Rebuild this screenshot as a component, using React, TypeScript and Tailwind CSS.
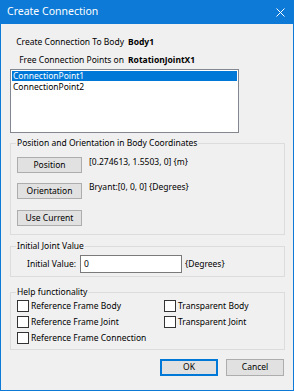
import React from 'react';

const font = { fontFamily: '"Noto Sans", "Liberation Sans", sans-serif' };

const WinButton: React.FC<{ label: string; className?: string; primary?: boolean }> = ({ label, className = '', primary }) => (
  <button
    className={`h-[16px] flex items-center justify-center bg-[#e1e1e1] text-[8.5px] text-black leading-none ${
      primary ? 'border-2 border-[#0078d7]' : 'border border-[#adadad]'
    } ${className}`}
  >
    {label}
  </button>
);

const Check: React.FC<{ label: string }> = ({ label }) => (
  <label className="flex items-center h-[16px] gap-[2px] text-[8.5px] text-black">
    <span className="w-[12px] h-[12px] border border-[#333] bg-white" />
    {label}
  </label>
);

const Group: React.FC<{ title: string; className?: string; children: React.ReactNode }> = ({ title, className = '', children }) => (
  <fieldset className={`ml-[9px] w-[275px] border border-[#dcdcdc] ${className}`}>
    <legend className="ml-[5px] px-px text-[8.5px] leading-[12px] text-black">{title}</legend>
    {children}
  </fieldset>
);

export default function App() {
  return (
    <div style={font} className="w-[294px] h-[391px] flex flex-col bg-[#0c7ad6] px-px pb-px">
      <div className="h-[24px] flex items-center justify-between pl-[6px] pr-[8px] text-white text-[10.5px]">
        <span>Create Connection</span>
        <svg width="9" height="9" viewBox="0 0 9 9" className="mt-[1px]">
          <path d="M0.5 0.5 L8.5 8.5 M8.5 0.5 L0.5 8.5" stroke="white" strokeWidth="1" />
        </svg>
      </div>

      <div className="flex-1 bg-[#f0f0f0] flex flex-col">
        <div className="mt-[9px] flex h-[18px] items-center text-[8.5px] text-black">
          <span className="w-[123px] text-right">Create Connection To Body</span>
          <span className="pl-[4px] font-bold">Body1</span>
        </div>
        <div className="flex h-[18px] items-center text-[8.5px] text-black">
          <span className="w-[123px] text-right">Free Connection Points on</span>
          <span className="pl-[4px] font-bold">RotationJointX1</span>
        </div>

        <div className="ml-[9px] w-[229px] h-[64px] border border-[#828790] bg-white p-px text-[8.5px]">
          <div className="h-[10px] leading-[10px] bg-[#0078d7] text-white pl-px">ConnectionPoint1</div>
          <div className="h-[11px] leading-[12px] text-black pl-px">ConnectionPoint2</div>
        </div>

        <Group title="Position and Orientation in Body Coordinates" className="mt-[4px]">
          <div className="mt-[8px] pl-[6px] pb-[8px] flex flex-col gap-[10px]">
            <div className="flex items-start gap-[7px]">
              <WinButton label="Position" className="w-[65px]" />
              <span className="text-[8.5px] leading-[12px] -mt-[1px] text-black">[0.274613, 1.5503, 0] {'{m}'}</span>
            </div>
            <div className="flex items-start gap-[7px]">
              <WinButton label="Orientation" className="w-[65px]" />
              <span className="text-[8.5px] leading-[12px] -mt-[2px] text-black">Bryant:[0, 0, 0] {'{Degrees}'}</span>
            </div>
            <div className="flex items-start mt-px">
              <WinButton label="Use Current" className="w-[65px]" />
            </div>
          </div>
        </Group>

        <Group title="Initial Joint Value" className="mt-[5px]">
          <div className="mt-[3px] pl-[16px] pb-[3px] flex items-center text-[8.5px] text-black">
            <span>Initial Value:</span>
            <div className="ml-[4px] w-[102px] h-[18px] border border-[#7a7a7a] bg-white flex items-center pl-[3px]">0</div>
            <span className="ml-[3px]">{'{Degrees}'}</span>
          </div>
        </Group>

        <Group title="Help functionality" className="mt-[9px]">
          <div className="pl-[6px] pb-[3px] grid grid-cols-[147px_1fr]">
            <Check label="Reference Frame Body" />
            <Check label="Transparent Body" />
            <Check label="Reference Frame Joint" />
            <Check label="Transparent Joint" />
            <Check label="Reference Frame Connection" />
          </div>
        </Group>

        <div className="mt-[9px] ml-[159px] flex gap-[8px]">
          <WinButton label="OK" primary className="w-[58px] h-[17px]" />
          <WinButton label="Cancel" className="w-[58px] h-[17px]" />
        </div>
      </div>
    </div>
  );
}
